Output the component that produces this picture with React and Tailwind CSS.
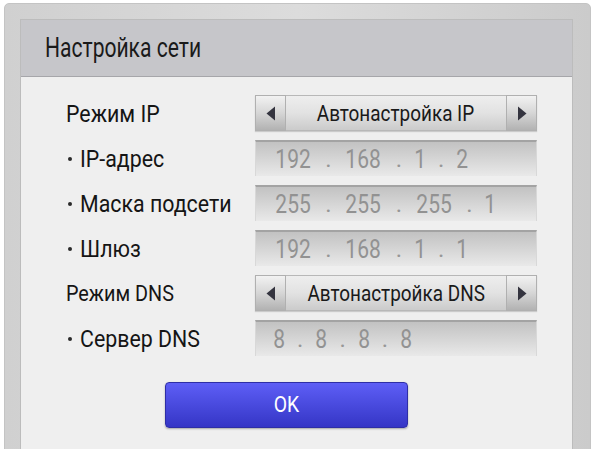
import React from 'react';

const font = { fontFamily: 'Roboto, "Noto Sans", sans-serif' };

function Arrow({ dir }) {
  return (
    <div className="w-[31px] h-full flex items-center justify-center bg-linear-to-b from-[#f2f2f2] via-[#d6d6d6] to-[#b2b2b2] border border-[#b0b0b0]">
      <svg width="10" height="15" viewBox="0 0 10 15">
        {dir === 'left' ? (
          <path d="M9 0.5 L9 14.5 L0.5 7.5 Z" fill="#34343f" />
        ) : (
          <path d="M1 0.5 L1 14.5 L9.5 7.5 Z" fill="#34343f" />
        )}
      </svg>
    </div>
  );
}

function Selector({ value }) {
  return (
    <div className="flex h-[36px] w-[282px] shadow-[0_1px_1px_rgba(0,0,0,0.15)]">
      <Arrow dir="left" />
      <div className="flex-1 flex items-center justify-center bg-linear-to-b from-[#eeeeee] via-[#e2e2e2] to-[#cbcbcb] border-y border-[#b8b8b8]">
        <span className="inline-block scale-x-[0.86] text-[22px] text-[#1a1a1a] leading-none pt-[1px]">{value}</span>
      </div>
      <Arrow dir="right" />
    </div>
  );
}

function AddressField({ parts }) {
  return (
    <div className="h-[36px] w-[282px] flex items-center pl-[16px] gap-[11px] bg-linear-to-b from-[#c2c2c2] to-[#e9e9e9] border-t-2 border-[#a3a3a3] border-x border-x-[#d8d8d8]">
      {parts.map((p, i) => (
        <React.Fragment key={i}>
          {i > 0 && <span className="text-[24px] text-[#979797] leading-none">.</span>}
          <span className="inline-block text-[25px] text-[#929292] leading-none scale-x-[0.84]">{p}</span>
        </React.Fragment>
      ))}
    </div>
  );
}

function Label({ text, bullet, small }) {
  return (
    <div className={`w-[234px] flex items-center pt-[2px] ${bullet ? 'pl-[47px]' : 'pl-[45px]'}`}>
      {bullet && <span className="w-[4px] h-[4px] rounded-full bg-[#2a2a2a] mr-[8px]" />}
      <span
        className={`inline-block origin-left leading-none text-[#151515] ${small ? 'text-[22px] scale-x-[0.9]' : 'text-[24px] scale-x-[0.89]'}`}
      >
        {text}
      </span>
    </div>
  );
}

export default function App() {
  return (
    <div className="w-[600px] h-[449px] bg-white overflow-hidden pl-[4px] pt-[3px]" style={font}>
      <div className="w-[587px] h-[470px] rounded-t-[5px] bg-linear-to-r from-[#d0d0d0] via-[#dcdcdc] to-[#cbcbcb] border border-[#c4c4c4] pl-[15px] pr-[17px] pt-[15px]">
        <div className="h-full bg-[#efefef] border border-[#bcbcbc]">
          <div className="h-[57px] bg-[#c6c6ca] border-b border-[#a6a6aa] flex items-center pl-[24px]">
            <span className="inline-block origin-left scale-x-[0.78] text-[27px] text-[#1a1a1a] leading-none">
              Настройка сети
            </span>
          </div>

          <div className="pt-[18px] flex flex-col gap-[9px]">
            <div className="flex h-[36px]">
              <Label text="Режим IP" />
              <Selector value="Автонастройка IP" />
            </div>
            <div className="flex h-[36px]">
              <Label text="IP-адрес" bullet />
              <AddressField parts={['192', '168', '1', '2']} />
            </div>
            <div className="flex h-[36px]">
              <Label text="Маска подсети" bullet />
              <AddressField parts={['255', '255', '255', '1']} />
            </div>
            <div className="flex h-[36px]">
              <Label text="Шлюз" bullet />
              <AddressField parts={['192', '168', '1', '1']} />
            </div>
            <div className="flex h-[36px]">
              <Label text="Режим DNS" small />
              <Selector value="Автонастройка DNS" />
            </div>
            <div className="flex h-[36px]">
              <Label text="Сервер DNS" bullet />
              <AddressField parts={['8', '8', '8', '8']} />
            </div>
          </div>

          <button className="mt-[26px] ml-[144px] w-[243px] h-[46px] rounded-[4px] bg-linear-to-b from-[#5e5ef6] to-[#3535c6] border border-[#2e2ea6] shadow-[0_1px_2px_rgba(0,0,0,0.3)] flex items-center justify-center">
            <span className="inline-block scale-x-[0.88] text-[22px] text-white leading-none">OK</span>
          </button>
        </div>
      </div>
    </div>
  );
}
